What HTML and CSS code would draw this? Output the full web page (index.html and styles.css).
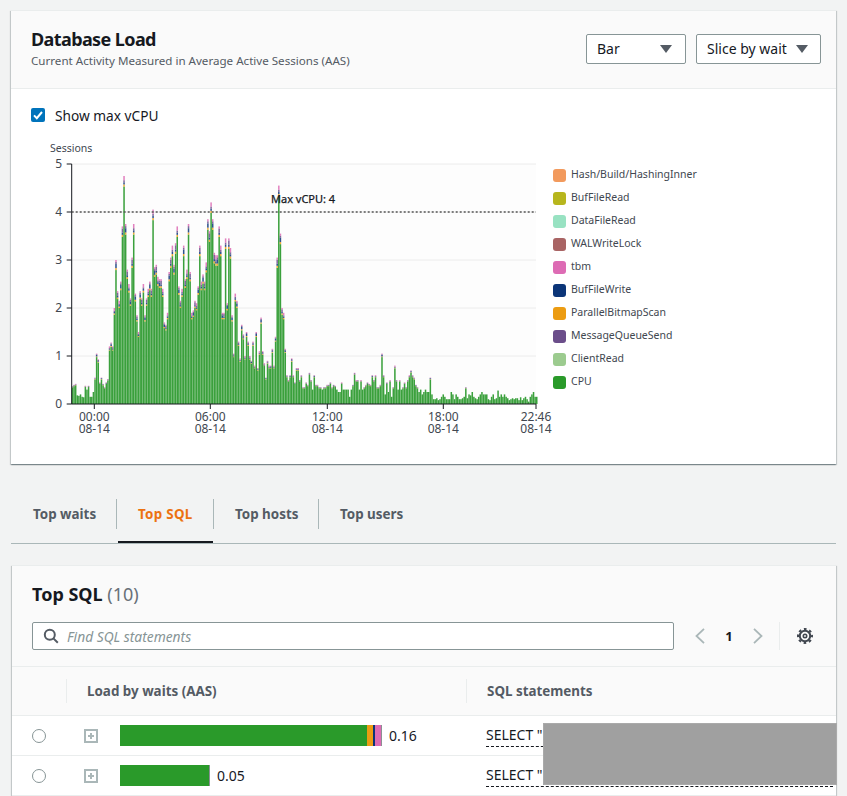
FILE: index.html
```html
<!DOCTYPE html>
<html lang="en">
<head>
  <meta charset="UTF-8" />
  <title>Database Load</title>
  <link rel="stylesheet" href="styles.css">
</head>
<body>
  <section class="card load-card">
    <header class="load-head">
      <div class="load-titles">
        <h2 class="card-title load-title">Database Load</h2>
        <p class="card-sub">Current Activity Measured in Average Active Sessions (AAS)</p>
      </div>
      <div class="select select-bar">Bar <span class="caret"></span></div>
      <div class="select select-slice">Slice by wait <span class="caret"></span></div>
    </header>
    <div class="load-body">
      <label class="vcpu-toggle">
        <span class="checkbox">
          <svg width="14" height="14" viewBox="0 0 14 14"><path d="M3 7.4l2.8 2.8L11 4" fill="none" stroke="#fff" stroke-width="2"/></svg>
        </span>
        Show max vCPU
      </label>
      <div class="chart-row">
        <svg id="chart" class="chart" width="510" height="300" viewBox="40 140 510 300"></svg>
        <ul class="legend">
          <li><span class="swatch" style="background:#f29a5d"></span>Hash/Build/HashingInner</li>
          <li><span class="swatch" style="background:#b7b61d"></span>BufFileRead</li>
          <li><span class="swatch" style="background:#98e2c2"></span>DataFileRead</li>
          <li><span class="swatch" style="background:#a96464"></span>WALWriteLock</li>
          <li><span class="swatch" style="background:#dd6bb4"></span>tbm</li>
          <li><span class="swatch" style="background:#0b3578"></span>BufFileWrite</li>
          <li><span class="swatch" style="background:#ec9c12"></span>ParallelBitmapScan</li>
          <li><span class="swatch" style="background:#6b4e8a"></span>MessageQueueSend</li>
          <li><span class="swatch" style="background:#9ccb8f"></span>ClientRead</li>
          <li><span class="swatch" style="background:#2a9a2a"></span>CPU</li>
        </ul>
      </div>
    </div>
  </section>

  <nav class="tabs">
    <a class="tab">Top waits</a>
    <a class="tab active">Top SQL</a>
    <a class="tab">Top hosts</a>
    <a class="tab">Top users</a>
  </nav>

  <section class="card sql-card">
    <div class="sql-head">
      <h2 class="card-title">Top SQL <span class="count">(10)</span></h2>
      <div class="sql-tools">
        <div class="search">
          <svg width="16" height="16" viewBox="0 0 16 16"><circle cx="6.8" cy="6.8" r="5" fill="none" stroke="#545b64" stroke-width="2"/><path d="M10.4 10.4l4.4 4.4" stroke="#545b64" stroke-width="2"/></svg>
          <span class="placeholder">Find SQL statements</span>
        </div>
        <div class="pager">
          <svg width="12" height="16" viewBox="0 0 12 16"><path d="M10 .8L2.5 8l7.5 7.2" fill="none" stroke="#aab7b8" stroke-width="1.8"/></svg>
          <span class="page-num">1</span>
          <svg width="12" height="16" viewBox="0 0 12 16"><path d="M2 .8L9.5 8 2 15.2" fill="none" stroke="#aab7b8" stroke-width="1.8"/></svg>
        </div>
        <div class="settings">
          <svg width="16" height="16" viewBox="0 0 16 16" fill="none" stroke="#414750">
            <circle cx="8" cy="8" r="5.2" stroke-width="2"/>
            <circle cx="8" cy="8" r="7" stroke-width="2" stroke-dasharray="2.7 2.8" stroke-dashoffset="1.35"/>
            <circle cx="8" cy="8" r="1.7" stroke-width="1.6"/>
          </svg>
        </div>
      </div>
    </div>
    <div class="sql-table">
      <div class="row head-row">
        <div class="col-select"></div>
        <div class="col-load">Load by waits (AAS)</div>
        <div class="col-sql">SQL statements</div>
      </div>
      <div class="row">
        <div class="col-select"><span class="radio"></span></div>
        <div class="col-load">
          <span class="expand"></span>
          <span class="load-bar">
            <i class="seg-cpu" style="width:247px"></i><i class="seg-orange" style="width:6px"></i><i class="seg-navy" style="width:2px"></i><i class="seg-pink" style="width:6px"></i><i class="seg-end"></i>
          </span>
          <span class="load-value">0.16</span>
        </div>
        <div class="col-sql"><span class="statement">SELECT "</span></div>
      </div>
      <div class="row">
        <div class="col-select"><span class="radio"></span></div>
        <div class="col-load">
          <span class="expand"></span>
          <span class="load-bar">
            <i class="seg-cpu" style="width:89px"></i><i class="seg-end"></i>
          </span>
          <span class="load-value">0.05</span>
        </div>
        <div class="col-sql"><span class="statement">SELECT "</span></div>
      </div>
    </div>
  </section>

  <div class="redacted"></div>

  <script src="chart.js"></script>
</body>
</html>
```

FILE: styles.css
```css
* {
  box-sizing: border-box;
}
html, body {
  height: 796px;
  overflow: hidden;
}
body {
  margin: 0;
  padding: 10px 11px 0 11px;
  background-color: #f2f3f3;
  color: #16191f;
  font-family: 'Noto Sans', sans-serif;
  font-size: 14px;
  position: relative;
}
.card {
  background: #fff;
  border-top: 1px solid #eaeded;
  box-shadow: 0 1px 1px rgba(0,28,36,0.3), 1px 1px 1px rgba(0,28,36,0.15), -1px 1px 1px rgba(0,28,36,0.15);
}
.card-title {
  margin: 0;
  font-size: 18px;
  line-height: 22px;
  font-weight: 700;
}
.load-title {
  letter-spacing: -0.6px;
}
.card-sub {
  margin: 3px 0 0;
  font-size: 11.6px;
  line-height: 16px;
  color: #545b64;
}
.load-card {
  height: 454px;
}
.load-head {
  height: 78px;
  display: flex;
  align-items: flex-start;
  padding: 17px 15px 0 20px;
  background: #fafafa;
  border-bottom: 1px solid #eaeded;
}
.load-titles {
  flex: 1;
}
.select {
  height: 30px;
  margin-top: 6px;
  display: flex;
  align-items: center;
  justify-content: space-between;
  padding: 0 13px 1px 10px;
  background: #fff;
  border: 1px solid #879596;
  border-radius: 2px;
}
.select-bar {
  width: 100px;
}
.select-slice {
  width: 125px;
  margin-left: 10px;
  padding-right: 12px;
}
.caret {
  width: 0;
  height: 0;
  border-left: 6px solid transparent;
  border-right: 6px solid transparent;
  border-top: 8px solid #545b64;
}
.load-body {
  padding: 17px 0 0 20px;
}
.vcpu-toggle {
  display: flex;
  align-items: center;
  gap: 10px;
  height: 18px;
  font-size: 13.7px;
  color: #16191f;
}
.checkbox {
  width: 14px;
  height: 14px;
  background: #0073bb;
  border-radius: 2px;
  display: block;
}
.checkbox svg {
  display: block;
}
.chart-row {
  display: flex;
  margin: 16px 0 0 9px;
}
.chart {
  display: block;
  flex: none;
  overflow: visible;
  font-family: 'Noto Sans', sans-serif;
}
.chart .tick {
  font-size: 12px;
  fill: #414750;
}
.chart .axis-name {
  font-size: 10.5px;
  fill: #414750;
}
.chart .max-label {
  font-size: 11px;
  fill: #16191f;
  stroke: #16191f;
  stroke-width: 0.25px;
}
.legend {
  list-style: none;
  margin: 25px 0 0 3px;
  padding: 0;
  display: flex;
  flex-direction: column;
  gap: 5px;
  font-size: 10.5px;
  color: #414750;
}
.legend li {
  height: 18px;
  display: flex;
  align-items: center;
  gap: 5px;
}
.swatch {
  width: 13px;
  height: 13px;
  border-radius: 3px;
  margin-top: 3px;
}
.tabs {
  height: 55px;
  margin: 25px 0 0 0;
  display: grid;
  grid-template-columns: 106px 97px 105px auto;
  align-items: start;
  padding-top: 10px;
  border-bottom: 1px solid #aab7b8;
}
.tab {
  height: 30px;
  line-height: 30px;
  padding-left: 21px;
  font-weight: 700;
  font-size: 13.4px;
  color: #545b64;
  border-right: 1px solid #aab7b8;
  position: relative;
}
.tab:first-child {
  padding-left: 22px;
}
.tab:last-child {
  border-right: none;
}
.tab.active {
  color: #ec7211;
  letter-spacing: 0.3px;
}
.tab.active::after {
  content: "";
  position: absolute;
  left: 1px;
  right: 0;
  top: 42px;
  height: 2px;
  background: #16191f;
}
.sql-card {
  margin: 21px 0 0 1px;
  height: 260px;
  background: #fafafa;
}
.sql-head {
  padding: 17px 20px 16px 20px;
  border-bottom: 1px solid #eaeded;
  height: 101px;
}
.count {
  font-weight: 400;
  color: #687078;
}
.sql-tools {
  display: flex;
  align-items: center;
  margin-top: 17px;
}
.search {
  flex: none;
  width: 642px;
  height: 28px;
  display: flex;
  align-items: center;
  gap: 8px;
  padding-left: 10px;
  background: #fff;
  border: 1px solid #879596;
  border-radius: 2px;
}
.placeholder {
  font-style: italic;
  font-size: 13.8px;
  color: #879596;
}
.pager {
  flex: none;
  width: 86px;
  height: 28px;
  margin-left: 20px;
  padding: 0 15px 0 0;
  display: flex;
  align-items: center;
  justify-content: space-between;
  border-right: 1px solid #eaeded;
}
.page-num {
  font-size: 13px;
  font-weight: 700;
}
.settings {
  flex: none;
  margin-left: 17px;
  height: 16px;
}
.settings svg, .pager svg, .search svg {
  display: block;
}
.row {
  height: 40px;
  display: flex;
  align-items: center;
  background: #fff;
  border-bottom: 1px solid #eaeded;
}
.head-row {
  height: 49px;
  background: #fafafa;
  font-weight: 700;
  font-size: 13.4px;
  color: #545b64;
}
.col-select {
  width: 55px;
  padding-left: 20px;
  height: 24px;
  display: flex;
  align-items: center;
}
.head-row .col-select {
  border-right: 1px solid #eaeded;
}
.col-load {
  width: 400px;
  padding-left: 20px;
  height: 24px;
  display: flex;
  align-items: center;
}
.head-row .col-load {
  border-right: 1px solid #eaeded;
}
.col-sql {
  flex: 1;
  padding-left: 20px;
}
.row:not(.head-row) .col-sql {
  padding-left: 19px;
}
.radio {
  width: 14px;
  height: 14px;
  border: 1px solid #879596;
  border-radius: 50%;
  background: #fff;
}
.expand {
  width: 14px;
  height: 14px;
  margin: 0 -2px 0 -3px;
  border: 2px solid #aab7b8;
  position: relative;
  flex: none;
}
.expand::before {
  content: "";
  position: absolute;
  left: 2px;
  top: 4px;
  width: 6px;
  height: 2px;
  background: #aab7b8;
}
.expand::after {
  content: "";
  position: absolute;
  left: 4px;
  top: 2px;
  width: 2px;
  height: 6px;
  background: #aab7b8;
}
.load-bar {
  display: flex;
  height: 21px;
  margin-left: 24px;
  flex: none;
}
.load-bar i {
  display: block;
  height: 100%;
}
.seg-cpu {
  background: #2a9a2a;
}
.seg-orange {
  background: #ec9c12;
}
.seg-navy {
  background: #0b3578;
}
.seg-pink {
  background: #dd6bb4;
}
.seg-end {
  width: 1px;
  background: #8b8f94;
}
.load-value {
  margin-left: 7px;
}
.statement {
  display: block;
  height: 22px;
  line-height: 19px;
  border-bottom: 1px dashed #16191f;
  margin-right: 3px;
}
.redacted {
  position: absolute;
  left: 543px;
  top: 723px;
  width: 294px;
  height: 62px;
  background: #a0a0a0;
  border: 1px solid #aaa;
}
```

FILE: chart.js
```js
// Load per 5 minute slot, read off the chart
const load = [
  .37,.4,.42,.18,.17,.2,.15,.14,.38,.3,.38,.15,.15,.25,.55,1.05,.93,.45,.55,.42,.35,.45,.52,
  1.2,1.28,1.2,2.0,3.0,2.35,2.15,2.55,3.7,4.75,3.75,2.8,2.5,2.2,3.05,3.75,2.3,1.85,1.5,2.35,
  2.2,2.5,1.85,2.2,2.4,2.55,2.4,4.05,2.85,2.9,2.65,2.6,2.6,2.4,1.7,1.65,1.9,2.75,3.05,3.3,
  2.9,3.35,3.7,2.45,2.15,2.4,3.3,2.6,2.8,3.75,2.75,1.9,1.95,2.15,2.1,2.45,3.3,2.55,2.7,2.55,
  2.95,3.85,3.6,4.2,3.85,3.15,3.1,3.1,3.7,3.3,1.9,1.9,3.45,2.1,3.45,3.25,1.85,1.05,2.3,2.15,
  1.3,.95,1.65,1.45,1,1.5,1.3,1,.9,1.3,.8,1.5,.75,1.1,1.8,1.1,.85,.55,.9,.8,
  .8,1.15,.8,1.4,3.05,4.55,3.55,2,1.9,1.15,.6,.5,.6,.95,.6,.45,.75,.75,.5,.6,
  .35,.35,.45,.4,.65,.5,.3,.6,.4,.4,.35,.35,.3,.35,.35,.4,.4,.45,.35,.4,.38,
  .3,.25,.25,.45,.3,.3,.3,.3,.15,.3,.4,.65,.5,.5,.3,.5,.3,.35,.4,.45,.42,
  .4,.6,.5,.6,.35,.35,.4,1.05,.6,.2,.45,.25,.5,.15,.35,.8,.5,.3,.5,.3,.35,
  .45,.35,.5,.6,.7,.6,.55,.4,.35,.25,.3,.2,.25,.3,.25,.25,.55,.2,.1,.1,.12,
  .08,.1,.15,.2,.15,.1,.1,.1,.25,.2,.1,.2,.15,.1,.1,.12,.15,.35,.12,.2,.18,
  .25,.15,.12,.1,.15,.2,.25,.2,.2,.2,.1,.08,.15,.2,.1,.12,.28,.15,.2,.15,
  .2,.15,.12,.08,.1,.12,.1,.12,.12,.08,.14,.08,.12,.15,.1,.05,.15,.2,.25,.15,.15
];

const left = 71.7, right = 536, zero = 404, unit = 48;
const ns = "http://www.w3.org/2000/svg";
const chart = document.getElementById("chart");

function add(tag, attrs, text) {
  const el = document.createElementNS(ns, tag);
  for (const k in attrs) el.setAttribute(k, attrs[k]);
  if (text) el.textContent = text;
  chart.appendChild(el);
  return el;
}

add("rect", { x: left, y: zero - 5 * unit, width: right - left, height: 5 * unit, fill: "#fdfdfd" });

// gridlines and y axis labels
for (let v = 0; v <= 5; v++) {
  const y = zero - v * unit;
  if (v > 0) add("line", { x1: left, x2: right, y1: y, y2: y, stroke: "#ececec" });
  add("line", { x1: left - 5, x2: left, y1: y, y2: y, stroke: "#16191f" });
  add("text", { x: 62, y: y + 4, "text-anchor": "end", class: "tick" }, String(v));
}
add("text", { x: 50, y: 152, class: "axis-name" }, "Sessions");

// bars
const step = (right - left) / 288;
const caps = ["#ec9c12", "#0b3578", "#6b4e8a", "#dd6bb4"];
load.forEach((v, i) => {
  const x = left + i * step;
  const w = step - 0.1;
  const cap = v > 0.3 ? Math.min(0.22, v * 0.07) : 0;
  const body = v - cap;
  add("rect", { x, y: zero - body * unit, width: w, height: body * unit, fill: "#3aa03c" });
  let top = body;
  caps.forEach((c, n) => {
    const h = cap * (n === (i % 3) + 1 ? 0.4 : 0.2);
    add("rect", { x, y: zero - (top + h) * unit, width: w, height: h * unit, fill: c, "fill-opacity": 0.85 });
    top += h;
  });
});

// axes
add("line", { x1: left, x2: left, y1: zero - 5 * unit, y2: zero, stroke: "#16191f" });
add("line", { x1: left, x2: right, y1: zero, y2: zero, stroke: "#16191f" });

const times = [[94.3, "00:00"], [210.3, "06:00"], [327.3, "12:00"], [443.3, "18:00"], [536, "22:46"]];
times.forEach(([x, label]) => {
  add("line", { x1: x, x2: x, y1: zero, y2: zero + 5, stroke: "#16191f" });
  const text = add("text", { y: 421, "text-anchor": "middle", class: "tick" });
  [[label, 0], ["08-14", 12]].forEach(([line, dy]) => {
    const span = document.createElementNS(ns, "tspan");
    span.setAttribute("x", x);
    span.setAttribute("dy", dy);
    span.textContent = line;
    text.appendChild(span);
  });
});

// max vCPU line
add("line", { x1: left, x2: right, y1: 212, y2: 212, stroke: "#555", "stroke-width": 1.6, "stroke-dasharray": "2 2" });
add("text", { x: 271, y: 203, class: "max-label" }, "Max vCPU: 4");
```
